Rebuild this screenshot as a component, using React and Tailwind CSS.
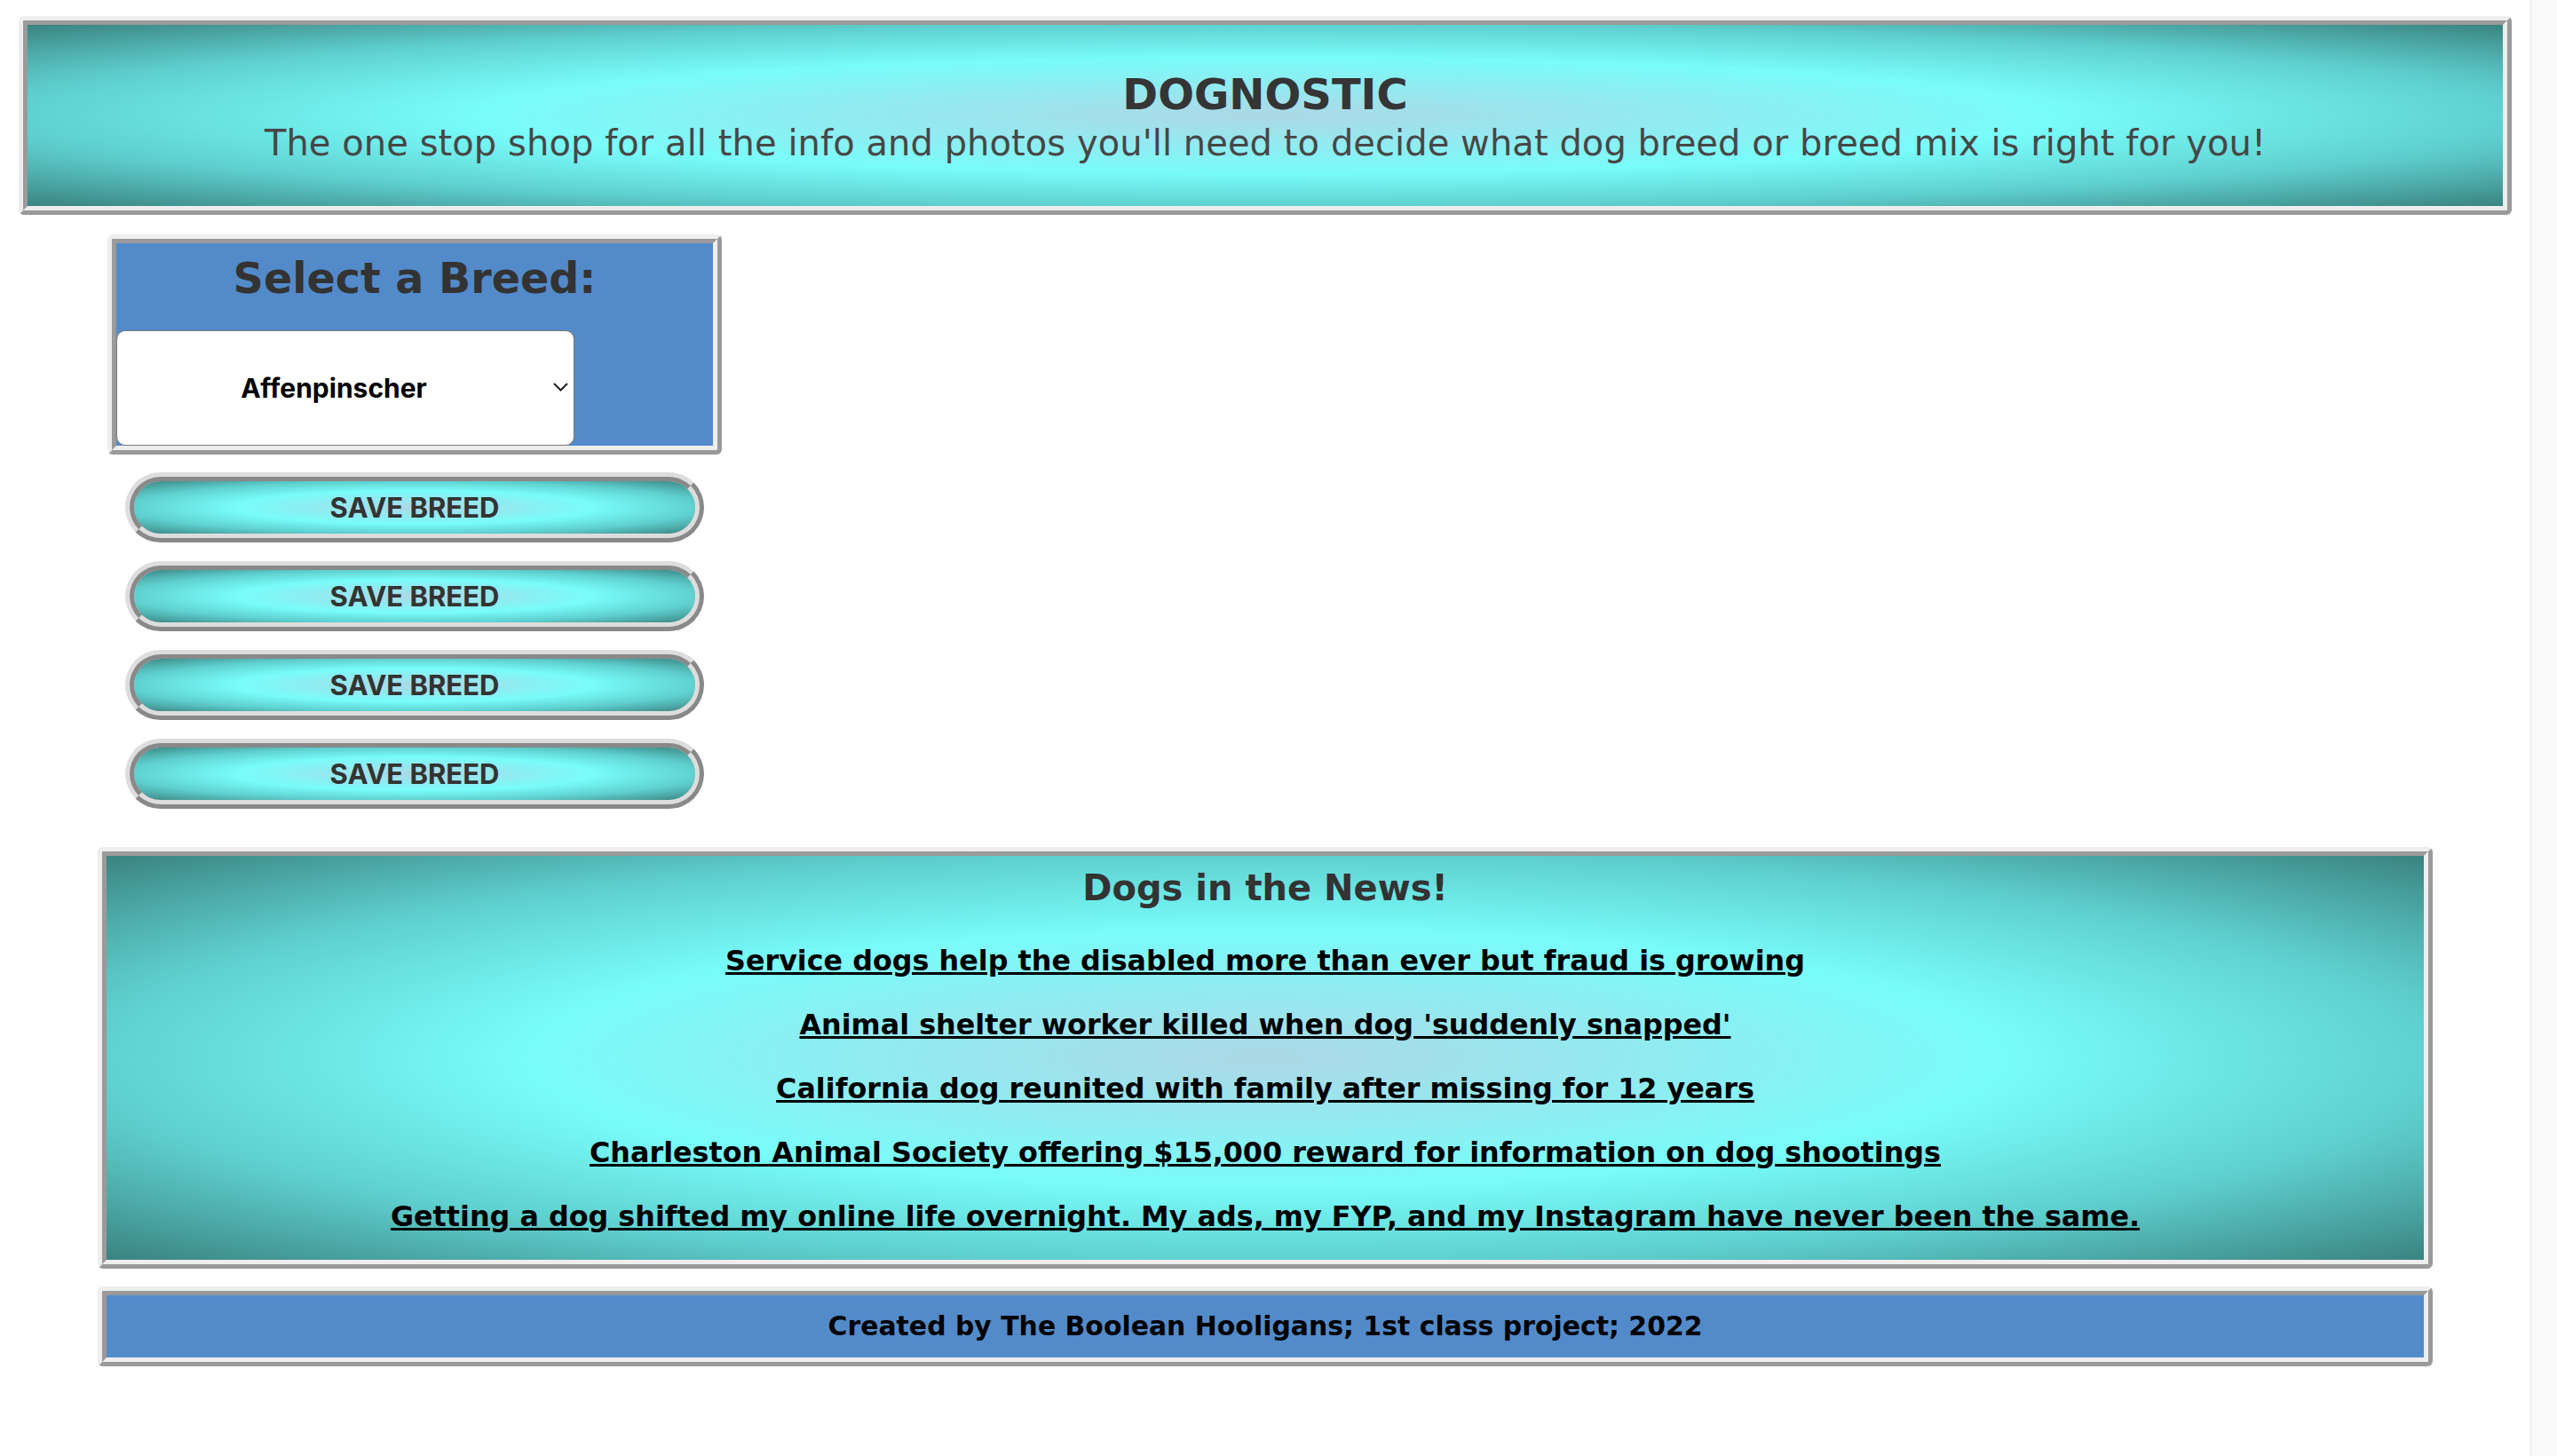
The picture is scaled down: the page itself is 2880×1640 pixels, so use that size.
import { useState } from 'react'

const breeds = ['Affenpinscher', 'Afghan Hound', 'Airedale Terrier', 'Akita', 'Alaskan Malamute', 'Basenji', 'Beagle']

const headlines = [
  'Service dogs help the disabled more than ever but fraud is growing',
  "Animal shelter worker killed when dog 'suddenly snapped'",
  'California dog reunited with family after missing for 12 years',
  'Charleston Animal Society offering $15,000 reward for information on dog shootings',
  'Getting a dog shifted my online life overnight. My ads, my FYP, and my Instagram have never been the same.',
]

const App = () => {
  const [breed, setBreed] = useState('Affenpinscher')

  return (
    <div className="flex min-h-screen bg-white font-['DejaVu_Sans',sans-serif]">
      <div className="flex-1 pt-[18px] pb-[40px]">
        {/* header */}
        <header className="mx-[21px] rounded-[6px] [border-style:ridge] border-[10px] border-[#eeeeee] bg-[radial-gradient(ellipse_at_center,#add8e6_0%,#78fcfa_45%,#5ecfce_72%,#3a8380_100%)] pt-[50px] pb-[47px] text-center">
          <h1 className="text-[48px] leading-[56px] font-bold text-[#353535]">DOGNOSTIC</h1>
          <p className="mt-[4px] text-[40px] leading-[47px] tracking-[0.06px] text-[#474747]">
            The one stop shop for all the info and photos you'll need to decide what dog breed or breed mix is right for you!
          </p>
        </header>

        {/* breed picker */}
        <div className="mt-[22px] ml-[121px] w-[692px] flex flex-col">
          <div className="rounded-[6px] [border-style:ridge] border-[10px] border-[#eeeeee] bg-[#538bca]">
            <h2 className="pt-[12px] pb-[30px] text-center text-[47.6px] leading-[56px] font-bold text-[#333333]">
              Select a Breed:
            </h2>
            <div className="relative w-[516px] h-[130px]">
              <select
                value={breed}
                onChange={(e) => setBreed(e.target.value)}
                className="appearance-none w-full h-full rounded-[10px] border border-[#767676] bg-white pr-[26px] text-center [text-align-last:center] font-['Inter',sans-serif] text-[30px] font-bold text-black outline-none"
              >
                {breeds.map((b) => (
                  <option key={b} value={b}>{b}</option>
                ))}
              </select>
              <svg className="pointer-events-none absolute left-[492px] top-[59px]" width="17" height="10" viewBox="0 0 17 10" fill="none">
                <polyline points="1,1 8.5,8.5 16,1" stroke="#1f1f1f" strokeWidth="2" />
              </svg>
            </div>
          </div>

          <div className="mt-[20px] mx-[20px] flex flex-col gap-[21px]">
            {[0, 1, 2, 3].map((i) => (
              <button
                key={i}
                type="button"
                className="h-[79px] flex items-center justify-center rounded-full [border-style:ridge] border-[10px] border-[#dddddd] bg-[radial-gradient(ellipse_at_center,#add8e6_0%,#78fcfa_45%,#5ecfce_72%,#3a8380_100%)] pt-[2px] font-['Inter',sans-serif] text-[31px] font-bold text-[#333333]"
              >
                SAVE BREED
              </button>
            ))}
          </div>
        </div>

        {/* news */}
        <section className="mt-[43px] mx-[110px] rounded-[6px] [border-style:ridge] border-[10px] border-[#eeeeee] bg-[radial-gradient(ellipse_at_center,#add8e6_0%,#78fcfa_45%,#5ecfce_72%,#3a8380_100%)] pt-[13px] pb-[31px] text-center">
          <h3 className="text-[40px] leading-[47px] font-bold text-[#333333]">Dogs in the News!</h3>
          <div className="mt-[39px] flex flex-col gap-[35px]">
            {headlines.map((h) => (
              <p key={h} className="text-[31.8px] leading-[37px] font-bold">
                <a href="#" className="text-black underline">{h}</a>
              </p>
            ))}
          </div>
        </section>

        {/* footer */}
        <footer className="mt-[20px] mx-[110px] rounded-[6px] [border-style:ridge] border-[10px] border-[#eeeeee] bg-[#538bca] py-[17px] text-center">
          <p className="text-[29.9px] leading-[36px] font-bold text-black">
            Created by The Boolean Hooligans; 1st class project; 2022
          </p>
        </footer>
      </div>

      {/* scrollbar track */}
      <div className="w-[30px] shrink-0 border-l border-[#e6e6e6] bg-[#fafafa]" />
    </div>
  )
}

export default App
